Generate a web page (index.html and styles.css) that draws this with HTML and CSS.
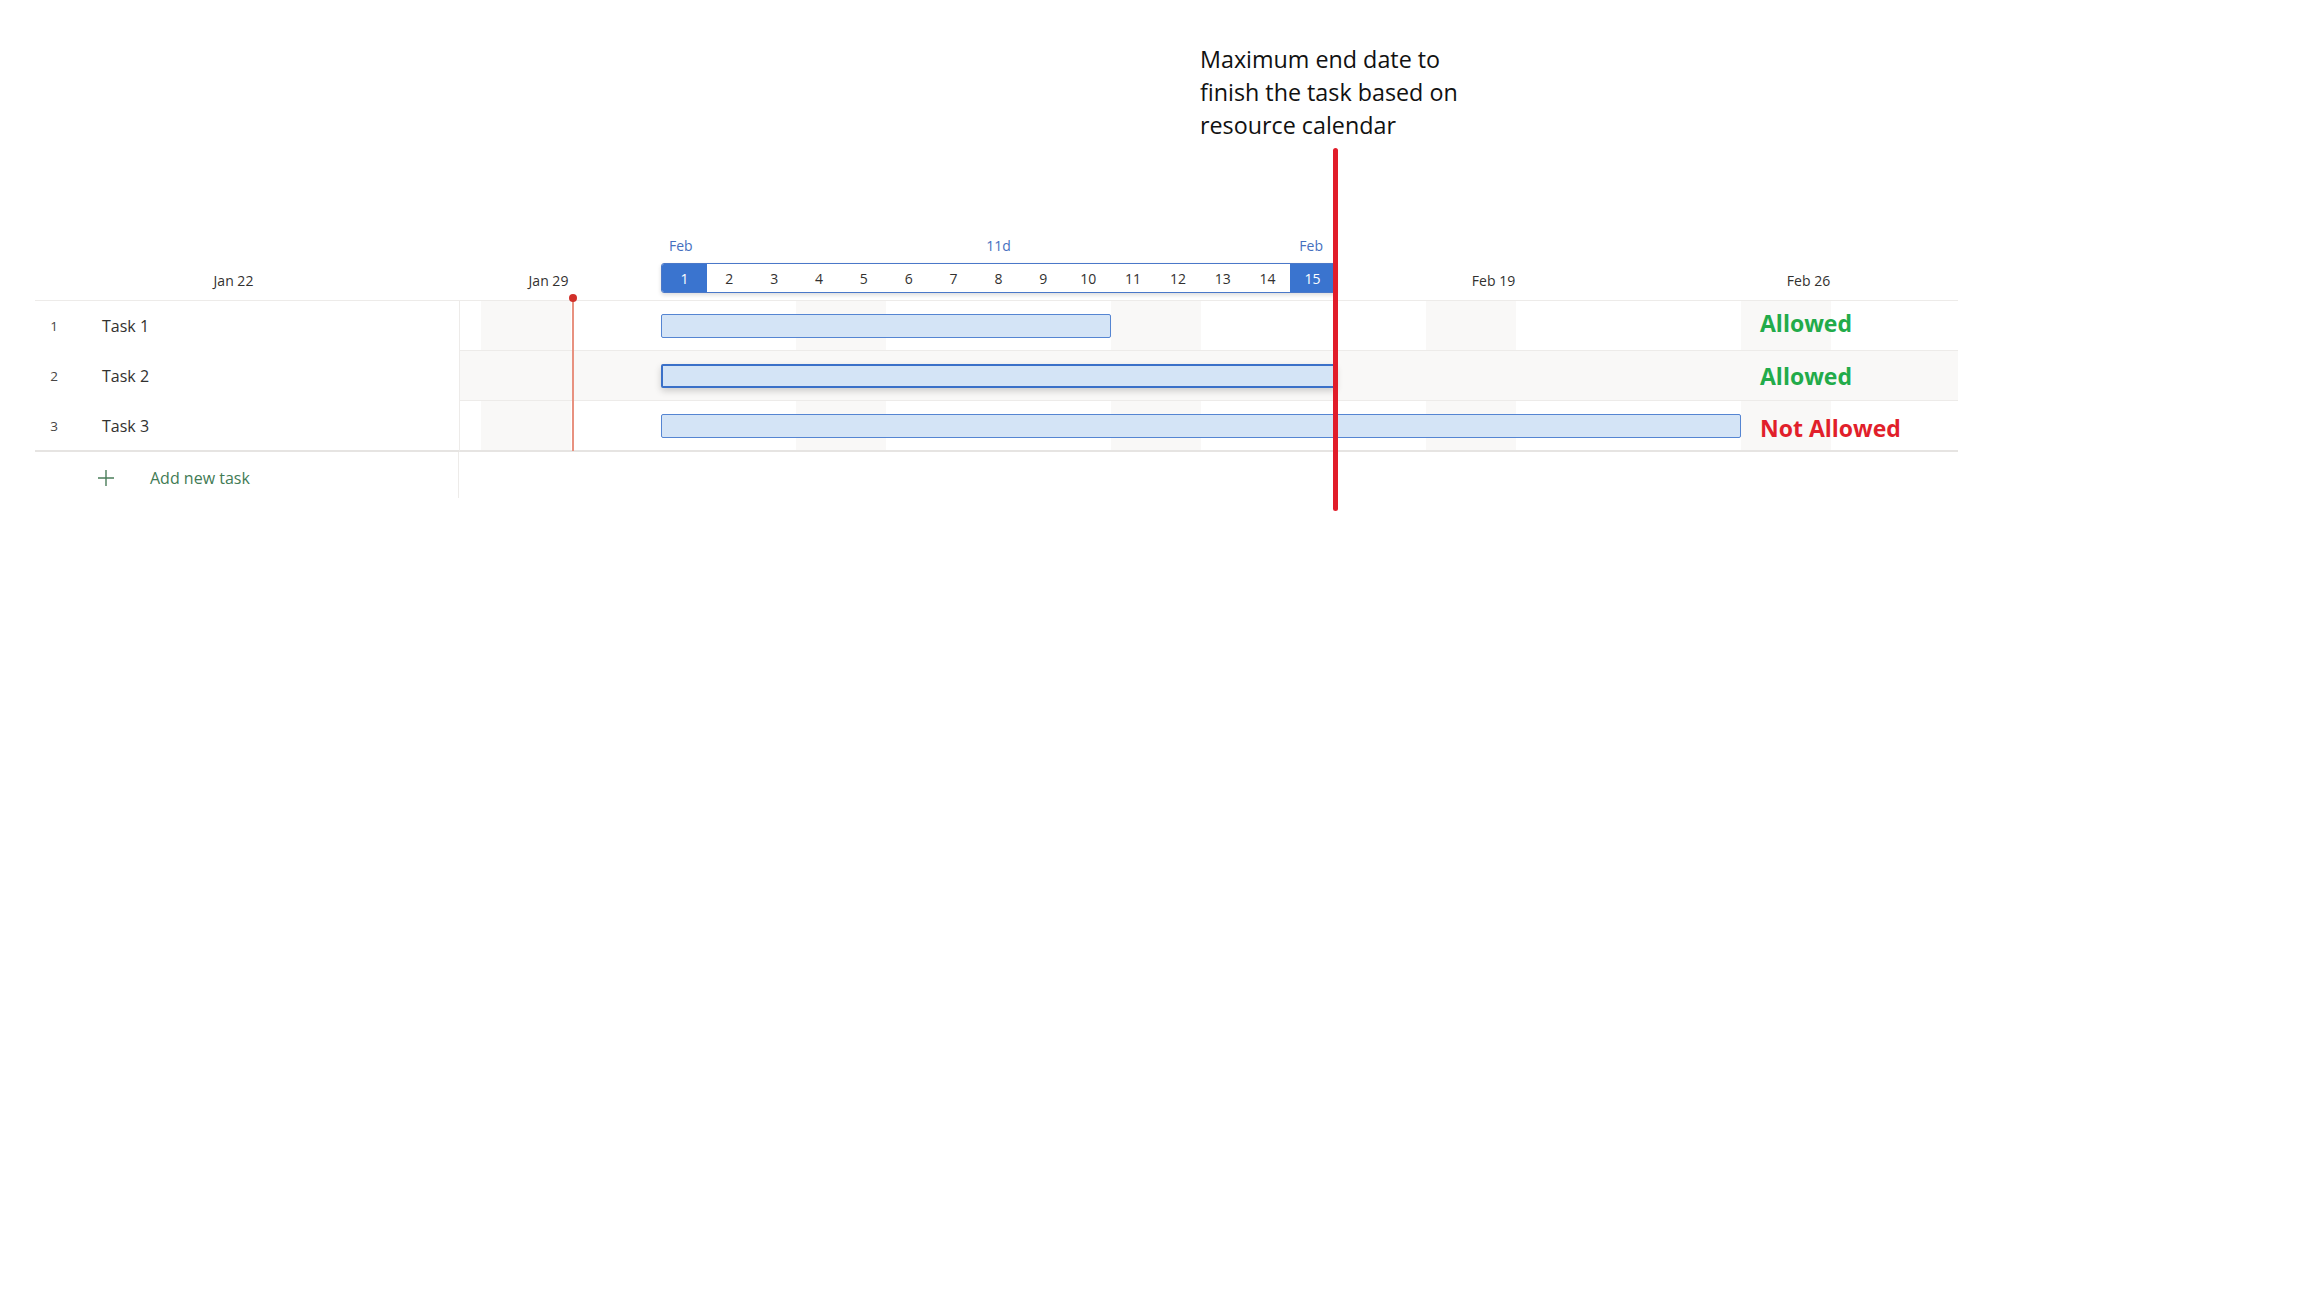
FILE: index.html
```html
<!DOCTYPE html>
<html lang="en">
<head>
<meta charset="utf-8">
<title>Gantt – maximum end date</title>
<link rel="stylesheet" href="styles.css">
</head>
<body>
<div class="page">
  <div class="note">Maximum end date to<br>finish the task based on<br>resource calendar</div>
  <div class="maxline"></div>

  <div class="chart">
    <div class="header">
      <div class="weeks">
        <div class="wk"><span>Jan 22</span></div>
        <div class="wk"><span>Jan 29</span></div>
        <div class="wk"><span></span></div>
        <div class="wk"><span></span></div>
        <div class="wk"><span>Feb 19</span></div>
        <div class="wk"><span>Feb 26</span></div>
      </div>
      <div class="range">
        <div class="range-top">
          <span class="rt-start">Feb</span>
          <span class="rt-mid">11d</span>
          <span class="rt-end">Feb</span>
        </div>
        <div class="strip">
          <span class="day sel">1</span><span class="day">2</span><span class="day">3</span><span class="day">4</span><span class="day">5</span><span class="day">6</span><span class="day">7</span><span class="day">8</span><span class="day">9</span><span class="day">10</span><span class="day">11</span><span class="day">12</span><span class="day">13</span><span class="day">14</span><span class="day sel">15</span>
        </div>
      </div>
    </div>

    <div class="body">
      <div class="today"><span class="today-dot"></span></div>

      <div class="row">
        <div class="left"><span class="num">1</span><span class="name">Task 1</span></div>
        <div class="tl">
          <div class="track"><div class="bar" style="margin-left:201px;width:450px"></div></div>
          <span class="verdict ok v-up">Allowed</span>
        </div>
      </div>
      <div class="row">
        <div class="left"><span class="num">2</span><span class="name">Task 2</span></div>
        <div class="tl tl-selected">
          <div class="track"><div class="bar bar-selected" style="margin-left:201px;width:675px"></div></div>
          <span class="verdict ok">Allowed</span>
        </div>
      </div>
      <div class="row row-last">
        <div class="left"><span class="num">3</span><span class="name">Task 3</span></div>
        <div class="tl">
          <div class="track"><div class="bar" style="margin-left:201px;width:1080px"></div></div>
          <span class="verdict bad v-down">Not Allowed</span>
        </div>
      </div>

      <div class="add-row">
        <div class="left add-left">
          <svg class="plus" width="18" height="18" viewBox="0 0 18 18" aria-hidden="true">
            <path d="M9 1v16M1 9h16" stroke="#4a7d5a" stroke-width="1.4" fill="none"/>
          </svg>
          <span class="add-text">Add new task</span>
        </div>
      </div>
    </div>
  </div>
</div>
</body>
</html>
```

FILE: styles.css
```css
html, body {
  margin: 0;
  padding: 0;
  background: #ffffff;
}

.page {
  position: relative;
  width: 2304px;
  height: 1296px;
  overflow: hidden;
  font-family: "Open Sans", "Noto Sans", sans-serif;
  color: #323130;
}

/* annotation overlay */
.note {
  position: absolute;
  left: 1200px;
  top: 43px;
  font-size: 23.3px;
  line-height: 33px;
  color: #111111;
}

.maxline {
  position: absolute;
  left: 1333px;
  top: 148px;
  width: 5px;
  height: 363px;
  background: #e11d2a;
  border-radius: 3px;
  z-index: 5;
}

/* chart */
.chart {
  margin-left: 35px;
  padding-top: 236px;
  width: 1923px;
}

.header {
  position: relative;
  height: 64px;
  border-bottom: 1px solid #edebe9;
  overflow: hidden;
}

.weeks {
  display: flex;
  height: 100%;
  padding-left: 176px;
  align-items: flex-end;
  padding-bottom: 9px;
  box-sizing: border-box;
}

.wk {
  flex: 0 0 315px;
}

.wk span {
  display: block;
  width: 65px;
  margin-left: -10px;
  text-align: center;
  white-space: nowrap;
  font-size: 14px;
  line-height: 20px;
  color: #323130;
}

/* date range popup in header */
.range {
  position: absolute;
  left: 626px;
  top: 0;
  width: 675px;
}

.range-top {
  display: grid;
  grid-template-columns: 1fr auto 1fr;
  font-size: 14px;
  line-height: 20px;
  color: #4670c0;
  height: 27px;
}

.rt-start {
  padding-left: 8px;
}

.rt-end {
  text-align: right;
  padding-right: 13px;
}

.strip {
  display: flex;
  height: 30px;
  box-sizing: border-box;
  border: 1px solid #4a78c9;
  border-radius: 3px;
  overflow: hidden;
  background: #ffffff;
  box-shadow: 0 2px 4px rgba(0, 0, 0, 0.14);
}

.day {
  flex: 1 1 0;
  display: flex;
  align-items: center;
  justify-content: center;
  font-size: 14px;
  color: #323130;
}

.day.sel {
  background: #3a74cf;
  color: #ffffff;
}

/* body rows */
.body {
  position: relative;
}

.row {
  display: flex;
  height: 50px;
}

.row-last {
  height: 51px;
}

.left {
  flex: 0 0 424px;
  display: flex;
  align-items: center;
  border-right: 1px solid #edebe9;
}

.num {
  width: 38px;
  text-align: center;
  font-size: 13.5px;
  color: #484644;
}

.name {
  margin-left: 29px;
  font-size: 16px;
  color: #323130;
}

.tl {
  flex: 1 1 auto;
  display: grid;
  grid-template-columns: 1300px auto;
  align-items: center;
  border-bottom: 1px solid #edebe9;
  background: repeating-linear-gradient(90deg, #f9f8f7 0 90px, #ffffff 90px 315px);
  background-position: 21px 0;
}

.tl-selected {
  background: #f9f8f7;
}

.row-last .tl,
.row-last .left {
  border-bottom: 2px solid #e6e4e2;
}

.track {
  display: flex;
  align-items: center;
}

.bar {
  height: 24px;
  box-sizing: border-box;
  background: #d4e4f6;
  border: 1px solid #5585d2;
  border-radius: 2px;
}

.bar-selected {
  border: 2px solid #3a70c8;
  box-shadow: 0 3px 7px rgba(0, 0, 0, 0.18);
}

.verdict {
  font-size: 23px;
  font-weight: 700;
  white-space: nowrap;
  line-height: 30px;
}

.v-up {
  margin-bottom: 6px;
}

.v-down {
  margin-top: 5px;
}

.verdict.ok { color: #22ab4a; }
.verdict.bad { color: #e11f2b; }

/* today marker */
.today {
  position: absolute;
  left: 537px;
  top: -4px;
  width: 2px;
  height: 154px;
  background: #e8917f;
  z-index: 3;
}

.today-dot {
  position: absolute;
  left: -3px;
  top: -3px;
  width: 8px;
  height: 8px;
  border-radius: 50%;
  background: #d1302a;
}

/* add new task */
.add-row {
  display: flex;
  height: 46px;
}

.add-left {
  border-right: 1px solid #edebe9;
  padding-left: 62px;
  padding-top: 5px;
  box-sizing: border-box;
}

.plus {
  display: block;
  flex: 0 0 18px;
}

.add-text {
  margin-left: 35px;
  font-size: 16px;
  color: #427b55;
}
```
